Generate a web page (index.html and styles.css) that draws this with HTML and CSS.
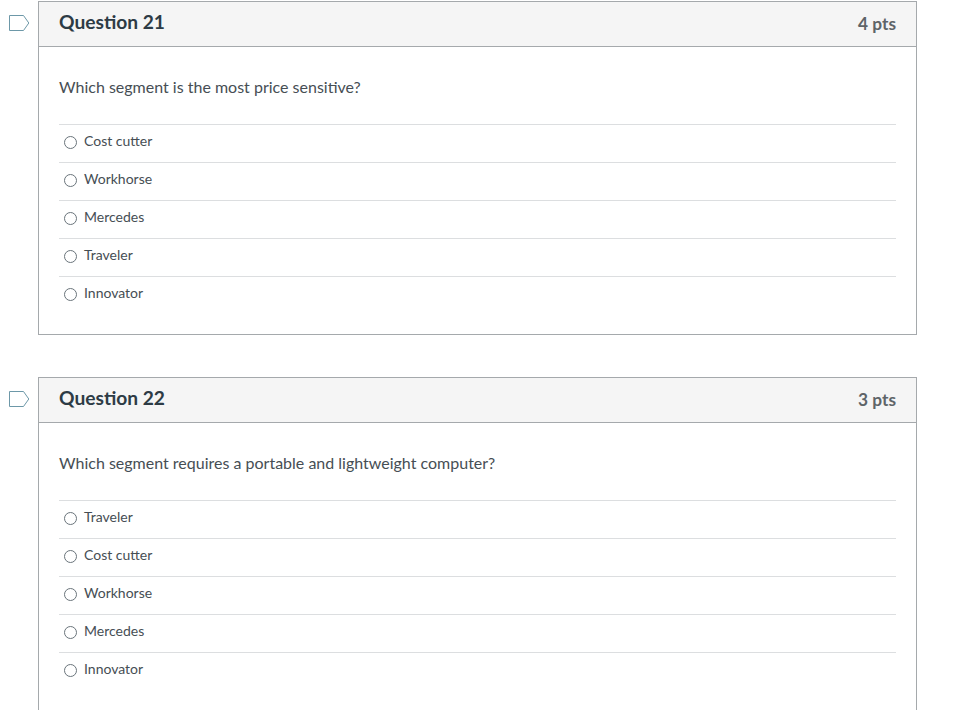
FILE: index.html
```html
<!DOCTYPE html>
<html lang="en">

<head>
    <meta charset="UTF-8">
    <title>Quiz</title>
    <link rel="stylesheet" href="styles.css">
</head>

<body>

    <div class="question">
        <div class="flag">
            <svg width="21" height="16" viewBox="0 0 21 16"><path d="M0.5 0.5H14.5L19.8 8L14.5 15.5H0.5Z" fill="none" stroke="#6d98a8" stroke-width="1"/></svg>
        </div>
        <div class="box">
            <div class="box_head">
                <h3>Question 21</h3>
                <span class="pts">4 pts</span>
            </div>
            <div class="box_body">
                <p class="text">Which segment is the most price sensitive?</p>
                <ul class="answers">
                    <li><span class="radio"></span>Cost cutter</li>
                    <li><span class="radio"></span>Workhorse</li>
                    <li><span class="radio"></span>Mercedes</li>
                    <li><span class="radio"></span>Traveler</li>
                    <li><span class="radio"></span>Innovator</li>
                </ul>
            </div>
        </div>
    </div>

    <div class="question">
        <div class="flag">
            <svg width="21" height="16" viewBox="0 0 21 16"><path d="M0.5 0.5H14.5L19.8 8L14.5 15.5H0.5Z" fill="none" stroke="#6d98a8" stroke-width="1"/></svg>
        </div>
        <div class="box">
            <div class="box_head">
                <h3>Question 22</h3>
                <span class="pts">3 pts</span>
            </div>
            <div class="box_body">
                <p class="text">Which segment requires a portable and lightweight computer?</p>
                <ul class="answers">
                    <li><span class="radio"></span>Traveler</li>
                    <li><span class="radio"></span>Cost cutter</li>
                    <li><span class="radio"></span>Workhorse</li>
                    <li><span class="radio"></span>Mercedes</li>
                    <li><span class="radio"></span>Innovator</li>
                </ul>
            </div>
        </div>
    </div>

</body>

</html>
```

FILE: styles.css
```css
* {
    margin: 0px;
    padding: 0px;
    box-sizing: border-box;
}

ul {
    list-style: none;
}

html,
body {
    height: 710px;
    overflow: hidden;
}

body {
    background-color: #fff;
    color: #464e54;
    font-family: Lato, "Liberation Sans", sans-serif;
    padding-top: 1px;
}

.question {
    display: flex;
    margin-bottom: 42px;
}

.flag {
    width: 38px;
    flex: none;
    padding: 14px 0 0 9px;
}

.flag svg {
    display: block;
}

.box {
    width: 879px;
    border: 1px solid #a5a9ac;
}

.box_head {
    height: 45px;
    background-color: #f5f5f5;
    border-bottom: 1px solid #a5a9ac;
    padding: 0 20px;
    display: flex;
    justify-content: space-between;
    align-items: center;
}

.box_head h3 {
    font-size: 19.2px;
    font-weight: 700;
    color: #2d3b45;
    line-height: 38px;
    padding-bottom: 4px;
}

.pts {
    font-size: 17.3px;
    font-weight: 700;
    color: #5e6468;
    padding-bottom: 2px;
}

.box_body {
    padding: 30px 20px 20px;
}

.text {
    font-size: 16px;
    line-height: 20px;
    margin-bottom: 27px;
}

.answers li {
    height: 38px;
    border-top: 1px solid #dcdee0;
    display: flex;
    align-items: center;
    font-size: 14px;
    padding-left: 5px;
    padding-bottom: 6px;
}

.radio {
    width: 13px;
    height: 13px;
    margin: 4px 7px 0 0;
    border: 1px solid #6a747b;
    border-radius: 50%;
    flex: none;
}
```
